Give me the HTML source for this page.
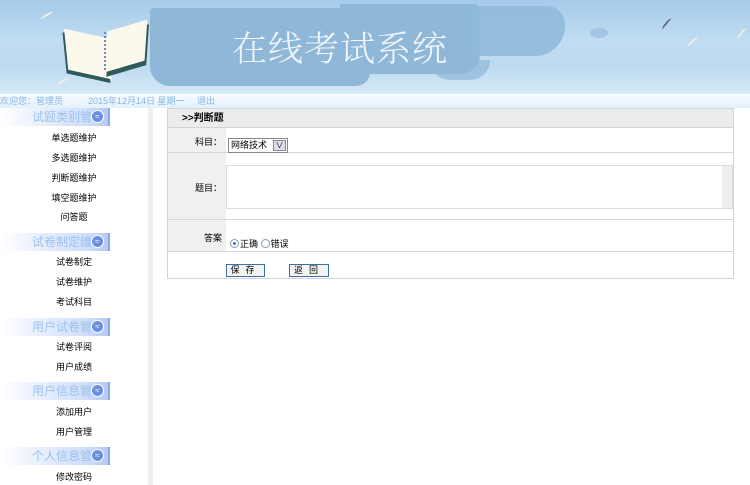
<!DOCTYPE html>
<html><head><meta charset="utf-8"><style>
*{margin:0;padding:0;box-sizing:border-box}
body{width:750px;height:485px;overflow:hidden;background:#fff;font-family:"Liberation Sans","Noto Sans CJK SC",sans-serif;font-size:9px;color:#000;position:relative}
.hdr{position:absolute;left:0;top:0;width:750px;height:94px;background:linear-gradient(180deg,#a6cbea 0%,#c0ddf2 45%,#bcdaf0 70%,#d6e9f6 100%);overflow:hidden}
.b{position:absolute;background:#8fb8d8}
.title{position:absolute;left:232px;top:22px;font-size:35px;color:#f2f6fa;font-family:"Noto Serif CJK SC","Noto Sans CJK SC",serif;font-weight:300;letter-spacing:1px}
.pg{position:absolute;background:#fbf9ec}
.bird{position:absolute;width:14px;height:4px;border-top:2px solid #f4f0e4;border-radius:50% 50% 0 0}
.bar{position:absolute;left:0;top:94px;width:750px;height:14px;background:linear-gradient(#f5faff,#e3f1fc);border-top:1px solid #fff;color:#87b6e0;font-size:9px;line-height:13px;white-space:pre}
.side{position:absolute;left:0;top:108px;width:148px;height:377px;background:#fff}
.sb{position:absolute;left:148px;top:108px;width:5px;height:377px;background:#eeeeea}
.sh{position:absolute;left:0;width:110px;height:18px;background:linear-gradient(90deg,#fff 0%,#e6eefc 40%,#d0defa 80%,#b4c8f4 100%);border-right:2px solid #8aa8ea;color:#9cc2f0;font-size:12px;line-height:18px;text-align:right;padding-right:16px;overflow:hidden;white-space:nowrap}
.sh i{position:absolute;right:4px;top:2px;width:13px;height:13px;border-radius:50%;background:#6b8fdc;border:1px solid #fff;color:#fff;font-style:normal;font-size:8px;line-height:11px;text-align:center}
.it{position:absolute;left:0;width:148px;text-align:center;font-size:9px;line-height:12px}
.tbl{position:absolute;left:167px;top:108px;width:567px;height:171px;border:1px solid #d4d4d4}
.r{position:absolute;left:0;width:565px;border-bottom:1px solid #d4d4d4}
.lab{position:absolute;left:0;top:0;bottom:0;width:58px;background:#f0f0f0;text-align:right;padding-right:4px}
.btn{position:absolute;top:155px;height:13px;border:1px solid #3d6fa8;background:#f4f4f4;font-size:9px;line-height:11px;text-align:center;letter-spacing:6px}
.rd{display:inline-block;width:9px;height:9px;border:1px solid #8a9ab0;border-radius:50%;background:#fff;vertical-align:-1px;margin-right:1px;position:relative}
.rd.on:after{content:"";position:absolute;left:2px;top:2px;width:3px;height:3px;border-radius:50%;background:#2a7ad8}
</style></head><body>
<div class="hdr">
<div class="b" style="left:150px;top:8px;width:220px;height:78px;border-radius:4px 10px 14px 20px"></div>
<div class="b" style="left:340px;top:4px;width:140px;height:70px;border-radius:2px 6px 20px 2px"></div>
<div class="b" style="left:470px;top:6px;width:95px;height:50px;border-radius:2px 18px 30px 10px;opacity:.85"></div>
<div class="b" style="left:430px;top:60px;width:60px;height:20px;border-radius:0 0 20px 20px;opacity:.7"></div>
<div class="b" style="left:590px;top:28px;width:18px;height:10px;border-radius:50%;opacity:.6"></div>
<div class="pg" style="left:66px;top:34px;width:44px;height:40px;transform:skewY(18deg) rotate(-6deg);box-shadow:-2px 4px 0 #2e5a5c"></div>
<div class="pg" style="left:106px;top:26px;width:40px;height:40px;transform:skewY(-20deg) rotate(4deg);box-shadow:2px 5px 0 #2e5a5c"></div>
<div style="position:absolute;left:104px;top:32px;width:6px;height:38px;border-left:2px dotted #7788aa"></div>
<div class="title">在线考试系统</div>
<div class="bird" style="left:40px;top:14px;transform:rotate(-30deg)"></div>
<div class="bird" style="left:56px;top:80px;transform:rotate(-30deg)"></div>
<div class="bird" style="left:660px;top:22px;transform:rotate(-50deg);border-color:#667"></div>
<div class="bird" style="left:686px;top:40px;transform:rotate(-40deg)"></div>
<div class="bird" style="left:735px;top:32px;transform:rotate(-50deg)"></div>
</div>
<div class="bar">欢迎您：管理员          2015年12月14日 星期一     退出</div>
<div class="side">
<div class="sh" style="top:0">试题类别管<i>≈</i></div>
<div class="it" style="top:24px">单选题维护</div>
<div class="it" style="top:44px">多选题维护</div>
<div class="it" style="top:64px">判断题维护</div>
<div class="it" style="top:84px">填空题维护</div>
<div class="it" style="top:103px">问答题</div>
<div class="sh" style="top:125px">试卷制定维<i>≈</i></div>
<div class="it" style="top:148px">试卷制定</div>
<div class="it" style="top:168px">试卷维护</div>
<div class="it" style="top:188px">考试科目</div>
<div class="sh" style="top:210px">用户试卷管<i>≈</i></div>
<div class="it" style="top:233px">试卷评阅</div>
<div class="it" style="top:253px">用户成绩</div>
<div class="sh" style="top:274px">用户信息管<i>≈</i></div>
<div class="it" style="top:298px">添加用户</div>
<div class="it" style="top:318px">用户管理</div>
<div class="sh" style="top:339px">个人信息管<i>≈</i></div>
<div class="it" style="top:363px">修改密码</div>
</div>
<div class="sb"></div>
<div class="tbl">
<div class="r" style="top:0;height:19px;background:#ececec;font-weight:bold;font-size:10px;line-height:19px;padding-left:14px">&gt;&gt;判断题</div>
<div class="r" style="top:19px;height:25px"><div class="lab" style="padding-top:7px">科目：</div>
<div style="position:absolute;left:60px;top:10px;width:60px;height:15px;border:1px solid #888;background:#fff;font-size:9px;line-height:13px;padding-left:2px">网络技术<span style="position:absolute;right:1px;top:1px;width:13px;height:11px;background:#dde;border:1px solid #889;font-size:8px;line-height:9px;text-align:center">∨</span></div></div>
<div class="r" style="top:44px;height:67px"><div class="lab" style="padding-top:28px">题目：</div>
<div style="position:absolute;left:58px;top:12px;width:507px;height:44px;border:1px solid #dcdcdc"><div style="position:absolute;right:0;top:0;width:10px;height:42px;background:#eee"></div></div></div>
<div class="r" style="top:111px;height:32px"><div class="lab" style="padding-top:11px">答案</div>
<div style="position:absolute;left:62px;top:17px;font-size:9px"><span class="rd on"></span>正确 <span class="rd"></span>错误</div></div>
<div class="btn" style="left:58px;width:39px">保存</div>
<div class="btn" style="left:121px;width:40px">返回</div>
</div>
</body></html>
